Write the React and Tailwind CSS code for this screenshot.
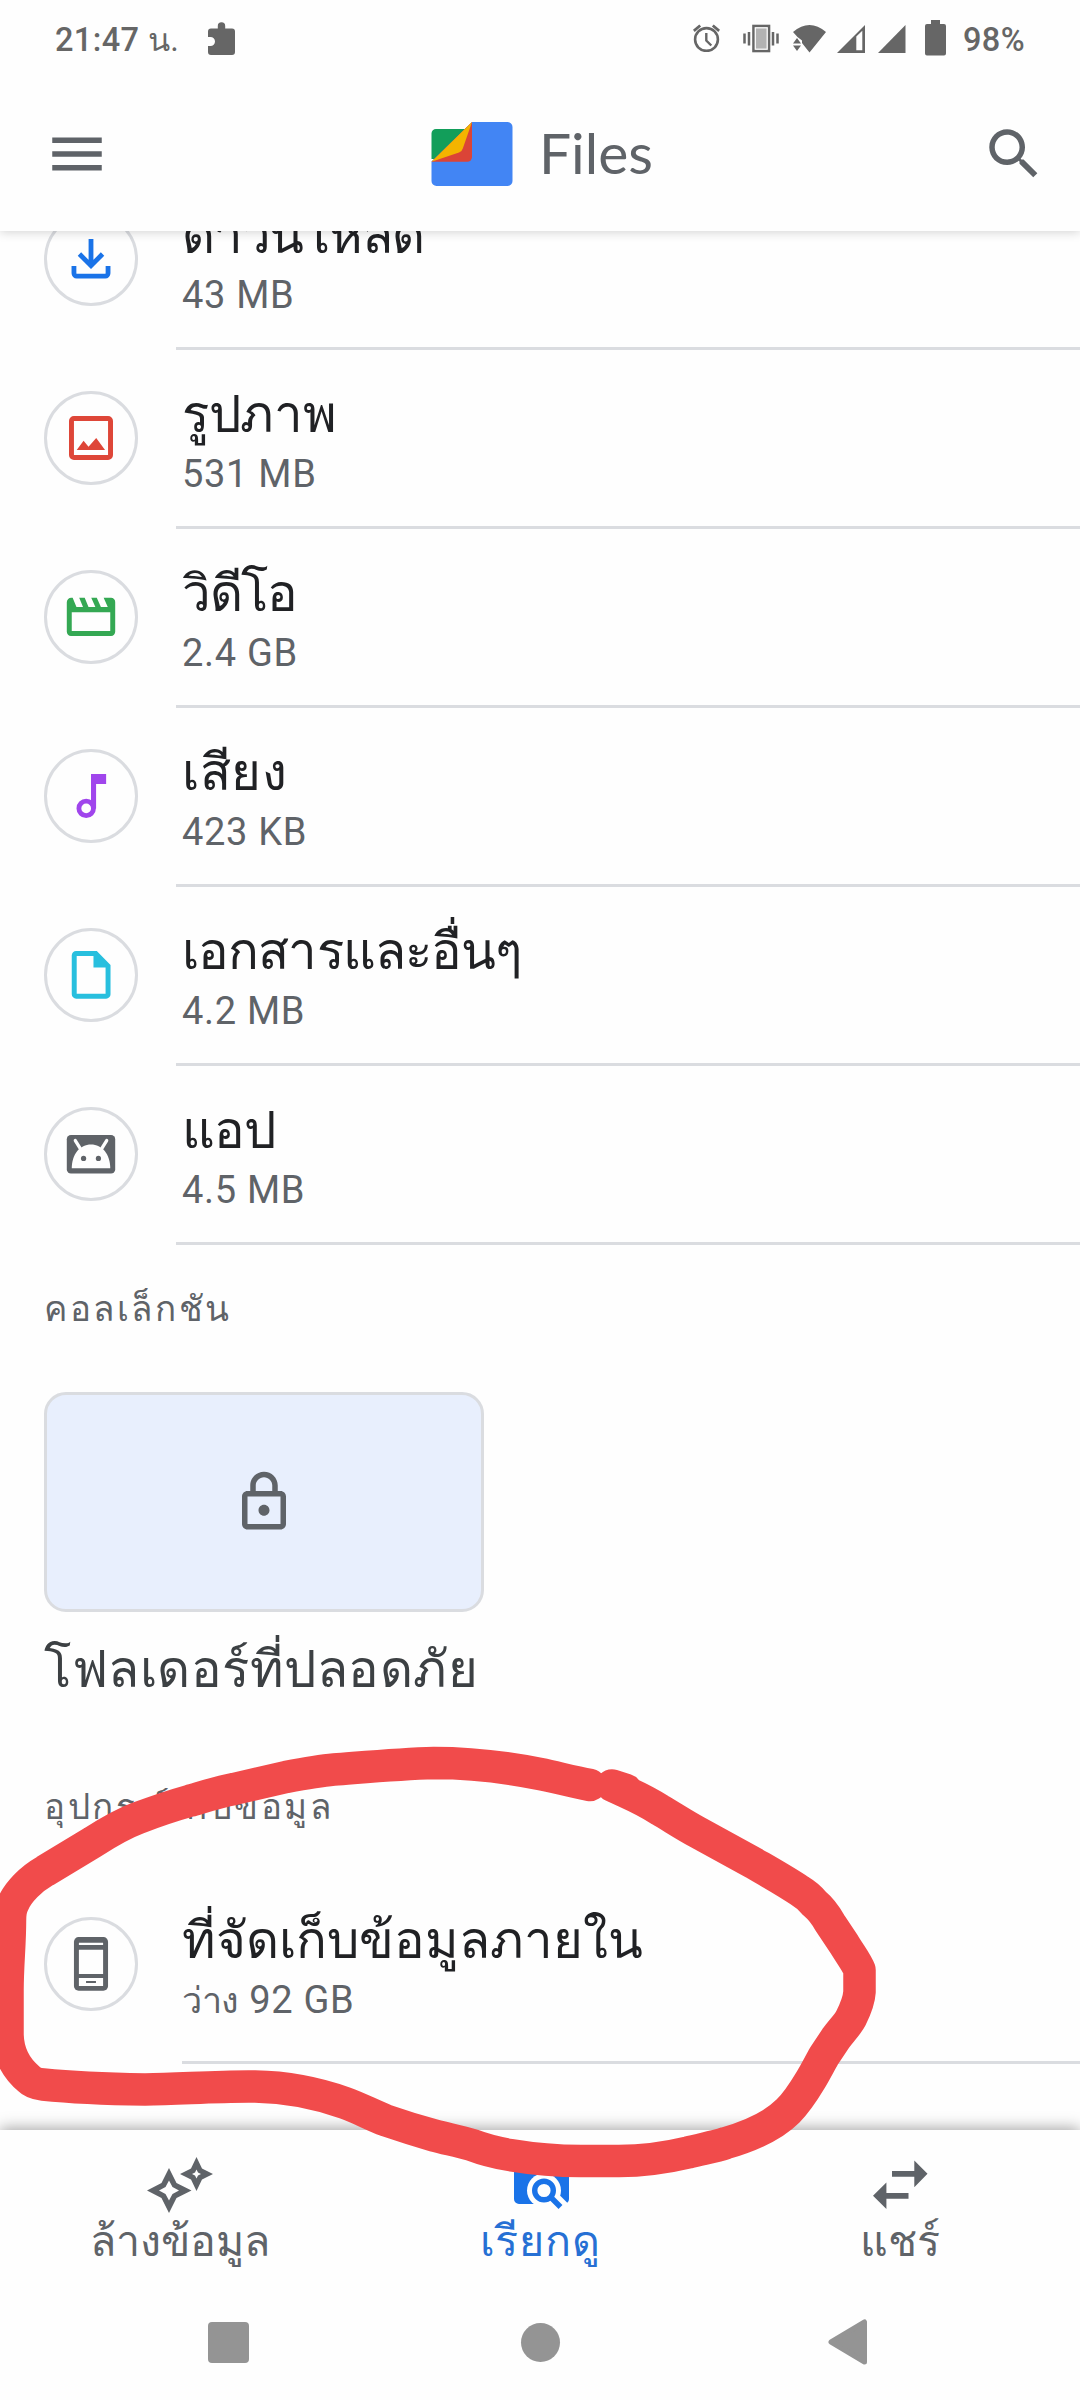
const categories = [
  { name: "ดาวน์โหลด", size: "43 MB", icon: DownloadIcon, tracking: "tracking-[-1.2px]" },
  { name: "รูปภาพ", size: "531 MB", icon: ImageIcon, tracking: "tracking-[-0.3px]" },
  { name: "วิดีโอ", size: "2.4 GB", icon: VideoIcon, tracking: "tracking-[-1.4px]" },
  { name: "เสียง", size: "423 KB", icon: AudioIcon, tracking: "tracking-[0.6px]" },
  { name: "เอกสารและอื่นๆ", size: "4.2 MB", icon: DocumentIcon, tracking: "tracking-[-0.9px]" },
  { name: "แอป", size: "4.5 MB", icon: AppsIcon, tracking: "tracking-[-1.2px]" },
];

function DownloadIcon() {
  return (
    <svg className="w-[66px] h-[66px] text-[#1a73e8]" viewBox="0 0 24 24" fill="none" stroke="currentColor" strokeWidth="1.75">
      <path d="M12 4.7v9.6M7.8 10.2l4.2 4.2 4.2-4.2" />
      <path d="M5.8 14.5v2.7a1 1 0 0 0 1 1h10.4a1 1 0 0 0 1-1v-2.7" />
    </svg>
  );
}

function ImageIcon() {
  return (
    <svg className="w-[66px] h-[66px] text-[#de4638]" viewBox="0 0 24 24">
      <rect x="4.9" y="4.9" width="14.2" height="14.2" rx="0.9" fill="none" stroke="currentColor" strokeWidth="1.8" />
      <path d="M6.8 16.4l2.5-3.4 1.8 2.2L13.9 12l3.2 4.4z" fill="currentColor" />
    </svg>
  );
}

function VideoIcon() {
  return (
    <svg className="w-[66px] h-[66px] text-[#34a853]" viewBox="0 0 24 24" fill="currentColor" fillRule="evenodd">
      <path d="M4.9 5h.43l1.38 3.4h2.38L7.71 5h2l1.38 3.4h2.5L12.09 5h2.01l1.5 3.4h2.5L16.6 5h2.7a1.5 1.5 0 0 1 1.5 1.5v10.9a1.5 1.5 0 0 1-1.5 1.5H4.7a1.5 1.5 0 0 1-1.5-1.5V6.6A1.6 1.6 0 0 1 4.9 5zM5 10.3v6.8h14v-6.8z" />
    </svg>
  );
}

function AudioIcon() {
  return (
    <svg className="w-[66px] h-[66px] text-[#a045ec]" viewBox="0 0 24 24" fill="currentColor">
      <circle cx="10.25" cy="16.5" r="2.65" fill="none" stroke="currentColor" strokeWidth="1.75" />
      <path d="M12 4h5.5v3.6h-3.65v8.9H12z" />
    </svg>
  );
}

function DocumentIcon() {
  return (
    <svg className="w-[66px] h-[66px] text-[#28bfde]" viewBox="0 0 24 24" fill="currentColor" fillRule="evenodd">
      <path d="M6.6 3.3h7.5l5 5.1v10.6a1.6 1.6 0 0 1-1.6 1.6H6.6A1.6 1.6 0 0 1 5 19V4.9a1.6 1.6 0 0 1 1.6-1.6zM6.8 5.1v13.7h10.5V9.3h-4.4V5.1z" />
    </svg>
  );
}

function AppsIcon() {
  return (
    <svg className="w-[66px] h-[66px] text-[#5f6368]" viewBox="0 0 24 24">
      <rect x="3.2" y="5.1" width="17.6" height="14" rx="1.5" fill="currentColor" />
      <path d="M5 17.2C5 12 8 8.5 12 8.5s7 3.5 7 8.7z" fill="#fefefe" />
      <path d="M6.3 7.1L8 9.9M17.7 7.1L16 9.9" stroke="#fefefe" strokeWidth="1.2" strokeLinecap="round" />
      <circle cx="9.3" cy="13.6" r="0.95" fill="currentColor" />
      <circle cx="14.7" cy="13.6" r="0.95" fill="currentColor" />
    </svg>
  );
}

function PhoneIcon() {
  return (
    <svg className="w-[66px] h-[66px] text-[#5f6368]" viewBox="0 0 24 24">
      <rect x="5.8" y="2.2" width="12.4" height="19.5" rx="1.7" fill="currentColor" />
      <path d="M7.6 4.3h8.8v.75H7.6zM7.6 6.8h8.8v8.8H7.6zM7.6 17.1h8.8V20H7.6z" fill="#fefefe" />
      <path d="M10.2 18.2h3.6v.75h-3.6z" fill="currentColor" />
    </svg>
  );
}

function LockIcon() {
  return (
    <svg className="w-[66px] h-[66px]" viewBox="0 0 24 24" fill="#5f6368">
      <path d="M18 8h-1V6c0-2.76-2.24-5-5-5S7 3.24 7 6v2H6c-1.1 0-2 .9-2 2v10c0 1.1.9 2 2 2h12c1.1 0 2-.9 2-2V10c0-1.1-.9-2-2-2zM9 6c0-1.66 1.34-3 3-3s3 1.34 3 3v2H9V6zm9 14H6V10h12v10zm-6-3c1.1 0 2-.9 2-2s-.9-2-2-2-2 .9-2 2 .9 2 2 2z" />
    </svg>
  );
}

function StatusBar() {
  return (
    <div className="flex h-[77px] shrink-0 items-start pl-[55px] text-[#666] font-medium text-[32.5px] leading-[40px]">
      <div className="mt-[20px] w-[153px] whitespace-nowrap tracking-[0.4px]">21:47 <span className="font-normal">น.</span></div>
      <svg className="mt-[22px] w-[27px] h-[34px]" viewBox="0 0 27 34" fill="currentColor">
        <path d="M3 6.5h6.8V4a3.7 3.7 0 0 1 7.4 0v2.5H24a3 3 0 0 1 3 3V30a3 3 0 0 1-3 3H3a3 3 0 0 1-3-3v-6h2.5a4.5 4.5 0 0 0 0-9H0V9.5a3 3 0 0 1 3-3z" />
      </svg>
      <svg className="ml-[458px] mt-[24px] w-[27px] h-[28px]" viewBox="0 0 27 28" fill="none" stroke="currentColor">
        <circle cx="13.5" cy="15.5" r="11.4" strokeWidth="2.6" />
        <path d="M13.3 9v7.5l5 5" strokeWidth="2.4" />
        <path d="M.8 6.8L7.2 1.5M26.2 6.8L19.8 1.5" strokeWidth="2.8" />
      </svg>
      <svg className="ml-[23px] mt-[24px] w-[36px] h-[29px]" viewBox="0 0 36 29">
        <rect x="10.5" y="2" width="15.5" height="25" fill="#b2b2b2" stroke="#666" strokeWidth="2.6" />
        <rect x="12.3" y="3.8" width="11.9" height="21.4" fill="none" stroke="#fefefe" strokeWidth="1.2" />
        <path d="M1.5 9.5v10M6 8v13.5M30 8v13.5M34.5 9.5v10" stroke="#666" strokeWidth="2.5" />
      </svg>
      <svg className="ml-[14px] mt-[24px] w-[33px] h-[29px]" viewBox="0 0 33 29" fill="currentColor">
        <path d="M0 8Q16.5-6 33 8L16.5 28.5 9 19V16.5L4.5 13z" />
        <path d="M0 19.5L4 14l4 5.5zM0 21.5h8L4 27z" />
      </svg>
      <svg className="ml-[11px] mt-[25px] w-[28px] h-[28px]" viewBox="0 0 28 28" fill="currentColor" fillRule="evenodd">
        <path d="M28 0v28H0zM19.3 11.5v13.8h6V5.8z" />
      </svg>
      <svg className="ml-[13px] mt-[25px] w-[28px] h-[28px]" viewBox="0 0 28 28" fill="currentColor">
        <path d="M27.5 0v28H0z" />
      </svg>
      <svg className="ml-[19px] mt-[20px] w-[21px] h-[36px]" viewBox="0 0 21 36" fill="currentColor">
        <path d="M6 0h9v4h4a2 2 0 0 1 2 2v27.5a2 2 0 0 1-2 2H2a2 2 0 0 1-2-2V6a2 2 0 0 1 2-2h4z" />
      </svg>
      <div className="ml-[17px] mt-[20px] tracking-[0.4px]">98%</div>
    </div>
  );
}

function Header() {
  return (
    <header className="flex h-[154px] shrink-0 items-center pl-[44px] pr-[33px]">
      <svg className="w-[66px] h-[66px]" viewBox="0 0 24 24" fill="#5f6368">
        <path d="M3 18h18v-2H3v2zm0-5h18v-2H3v2zm0-7v2h18V6H3z" />
      </svg>
      <svg className="ml-[321px] w-[82px] h-[64px]" viewBox="0 0 82 64">
        <path d="M5 7h30v30H.5V11.5A4.5 4.5 0 0 1 5 7z" fill="#129e5a" />
        <path d="M41 0h35.5a5 5 0 0 1 5 5v54a5 5 0 0 1-5 5h-71a5 5 0 0 1-5-5V39.5z" fill="#4285f4" />
        <path d="M41 0v35a4.8 4.8 0 0 1-4.8 4.8H.5z" fill="#db4437" />
        <path d="M41 0L31.8 26.5Q31 29.5 28 30.5L.5 39.8z" fill="#f4b400" />
      </svg>
      <h1 className="-mt-[4px] ml-[26px] font-['Lato',sans-serif] text-[57px] leading-[66px] text-[#5f6368]">Files</h1>
      <svg className="ml-auto w-[66px] h-[66px]" viewBox="0 0 24 24" fill="#5f6368">
        <path d="M15.5 14h-.79l-.28-.27C15.41 12.59 16 11.11 16 9.5 16 5.91 13.09 3 9.5 3S3 5.91 3 9.5 5.91 16 9.5 16c1.61 0 3.09-.59 4.23-1.57l.27.28v.79l5 4.99L20.49 19l-4.99-5zm-6 0C7.01 14 5 11.99 5 9.5S7.01 5 9.5 5 14 7.01 14 9.5 11.99 14 9.5 14z" />
      </svg>
    </header>
  );
}

function IconCircle({ children }) {
  return (
    <div className="mt-[41px] flex w-[94px] h-[94px] shrink-0 items-center justify-center rounded-full border-[3px] border-[#dadce0]">
      {children}
    </div>
  );
}

function RowText({ name, size, tracking = "" }) {
  return (
    <div className="pt-[35px] whitespace-nowrap">
      <div className={`text-[51px] leading-[60px] text-[#202124] ${tracking}`}>{name}</div>
      <div className="mt-[3px] text-[38px] leading-[52px] tracking-[0.7px] text-[#5f6368]">{size}</div>
    </div>
  );
}

function Row({ name, size, tracking, icon: Icon }) {
  return (
    <div className="flex h-[179px] shrink-0 items-start pl-[44px]">
      <IconCircle><Icon /></IconCircle>
      <div className="ml-[38px] h-full flex-1 border-b-[3px] border-[#dadce0] pl-[6px]">
        <RowText name={name} size={size} tracking={tracking} />
      </div>
    </div>
  );
}

function BottomNav() {
  return (
    <nav className="relative grid h-[154px] shrink-0 grid-cols-3 bg-[#fefefe] text-[43px] leading-[50px] text-[#5f6368] shadow-[0_-2px_14px_rgba(0,0,0,0.35)]">
      <div className="flex flex-col items-center">
        <svg className="mt-[27px] w-[66px] h-[56px]" viewBox="0 0 66 56" fill="currentColor" fillRule="evenodd">
          <path d="M22 11l7.5 15 15 7.5-15 7.5L22 56l-7.5-15L0 33.5 14.5 26zM22 23.5L18.5 30 12 33.5l6.5 3.5 3.5 6.5 3.5-6.5 6.5-3.5-6.5-3.5z" />
          <path d="M49.5 0L55 11.5 66 17l-11 5.5L49.5 34 44 22.5 33 17l11-5.5zM49.5 12.5l-1.5 3-3 1.5 3 1.5 1.5 3 1.5-3 3-1.5-3-1.5z" />
        </svg>
        <div className="mt-[3px]">ล้างข้อมูล</div>
      </div>
      <div className="flex flex-col items-center text-[#1a73e8]">
        <svg className="ml-[3px] mt-[27px] w-[56px] h-[56px]" viewBox="0 0 56 56">
          <path d="M5 3h16l6 6h23a5 5 0 0 1 5 5v28a5 5 0 0 1-5 5H5a5 5 0 0 1-5-5V8a5 5 0 0 1 5-5z" fill="currentColor" />
          <circle cx="30" cy="33.5" r="17" fill="#fefefe" />
          <path d="M36 39l16 16" stroke="#fefefe" strokeWidth="15" />
          <circle cx="30" cy="33.5" r="9.3" fill="none" stroke="currentColor" strokeWidth="5.4" />
          <path d="M36.5 40l10 10" stroke="currentColor" strokeWidth="5.5" />
        </svg>
        <div className="mt-[3px] tracking-[0.8px] text-[#2670d4]">เรียกดู</div>
      </div>
      <div className="flex flex-col items-center">
        <svg className="mt-[30px] w-[55px] h-[50px]" viewBox="0 0 55 50" fill="currentColor">
          <path d="M19 11h22.3V.5l13.2 13.2-13.2 13.5V16.7H19z" />
          <path d="M35.5 33v5.7H13.4V49L0 35.7l13.4-13.2V33z" />
        </svg>
        <div className="mt-[6px]">แชร์</div>
      </div>
    </nav>
  );
}

function SystemKeys() {
  return (
    <div className="relative flex h-[116px] shrink-0 items-center bg-[#fefefe] pl-[208px]">
      <div className="w-[41px] h-[41px] rounded-[4px] bg-[#949494]" />
      <div className="ml-[272px] w-[39px] h-[39px] rounded-full bg-[#949494]" />
      <svg className="ml-[268px] w-[40px] h-[46px]" viewBox="0 0 40 46">
        <path d="M3 23L36.5 3v40z" fill="#949494" stroke="#949494" strokeWidth="5" strokeLinejoin="round" />
      </svg>
    </div>
  );
}

// Freehand marker drawn over the storage row
function MarkerCircle() {
  return (
    <svg className="pointer-events-none absolute inset-0 w-[1080px] h-[2400px]" viewBox="0 0 1080 2400" fill="none" stroke="#f14b4b" strokeWidth="32.5" strokeLinecap="round" strokeLinejoin="round">
      <path d="M590 1785C570 1781 555 1777 540 1774C505 1767 470 1763 434 1763C400 1764 367 1767 334 1769.5C318 1771 302 1774 286 1777L234 1789C218 1792 203 1797 189 1801C171 1806 154 1812 138 1818C122 1824 107 1833 93 1842L45 1871C31 1879 18 1892 13 1904C10 1910 10 1915 10 1920C10 1945 7.5 1965 7.5 1990V2035C8 2055 18 2070 29 2079C33 2083 38 2084 43 2084.5C77 2088 111 2089 145 2089.5C182 2089 218 2086 255 2086.5C287 2087 317 2093 345 2103C359 2108 372 2115 386 2120.5C402 2126 418 2131 434 2135.5C447 2139 459 2141 472 2145C485 2150 498 2153 510 2155C534 2159 557 2161 581 2161H619C642 2161 665 2158 688 2152.5C701 2149 714 2147 726 2143C750 2136 774 2125 788 2111C797 2102 804 2091 810 2081C815 2073 820 2063 824 2056L836 2038C842 2030 848 2024 851 2018C855 2010 859 2000 859.5 1992V1970C857 1963 850 1954 844 1944L830 1923C825 1914 820 1908 814 1903C810 1898 805 1894 800 1891C785 1881 769 1872 753.5 1863L697 1832C684 1825 672 1817 660 1810C649 1803 637 1797 626 1792L612 1785.5L626 1790" />
    </svg>
  );
}

export default function App() {
  return (
    <div className="relative flex w-[1080px] h-[2400px] flex-col overflow-hidden bg-[#fefefe] font-['Roboto',sans-serif]">
      <div className="relative z-10 bg-[#fefefe] shadow-[0_1px_10px_rgba(0,0,0,0.18)]">
        <StatusBar />
        <Header />
      </div>

      <main className="flex h-[1899px] shrink-0 flex-col overflow-hidden">
        <div className="-mt-[60px]">
          {categories.map((c) => (
            <Row key={c.name} {...c} />
          ))}
        </div>

        <h2 className="mt-[45px] pl-[44px] text-[35px] leading-[40px] tracking-[2.6px] text-[#5f6368]">คอลเล็กชัน</h2>
        <div className="ml-[44px] mt-[62px] flex w-[440px] h-[220px] shrink-0 items-center justify-center rounded-[22px] border-[3px] border-[#dadce0] bg-[#e8effd]">
          <LockIcon />
        </div>
        <div className="mt-[28px] pl-[44px] text-[51px] leading-[60px] tracking-[0.5px] text-[#3c4043]">โฟลเดอร์ที่ปลอดภัย</div>

        <h2 className="mt-[88px] pl-[44px] text-[35px] leading-[40px] tracking-[2.5px] text-[#5f6368]">อุปกรณ์เก็บข้อมูล</h2>
        <div className="mt-[48px] flex h-[188px] shrink-0 items-start pl-[44px]">
          <IconCircle><PhoneIcon /></IconCircle>
          <div className="ml-[44px] h-full flex-1 border-b-[3px] border-[#dadce0]">
            <RowText name="ที่จัดเก็บข้อมูลภายใน" size={<><span className="text-[36px] tracking-[-0.3px]">ว่าง</span> 92 GB</>} />
          </div>
        </div>
      </main>

      <BottomNav />
      <SystemKeys />
      <MarkerCircle />
    </div>
  );
}
